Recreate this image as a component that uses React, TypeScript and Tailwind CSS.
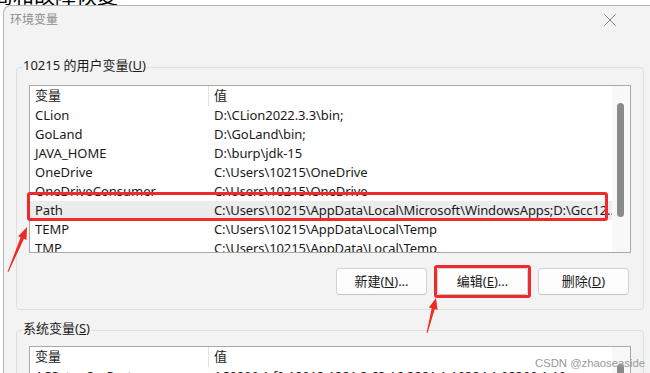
import { X } from "lucide-react";

type Row = { name: string; value: string };

const USER_VARS: Row[] = [
  { name: "CLion", value: "D:\\CLion2022.3.3\\bin;" },
  { name: "GoLand", value: "D:\\GoLand\\bin;" },
  { name: "JAVA_HOME", value: "D:\\burp\\jdk-15" },
  { name: "OneDrive", value: "C:\\Users\\10215\\OneDrive" },
  { name: "OneDriveConsumer", value: "C:\\Users\\10215\\OneDrive" },
  { name: "Path", value: "C:\\Users\\10215\\AppData\\Local\\Microsoft\\WindowsApps;D:\\Gcc12.." },
  { name: "TEMP", value: "C:\\Users\\10215\\AppData\\Local\\Temp" },
  { name: "TMP", value: "C:\\Users\\10215\\AppData\\Local\\Temp" },
];

const SYSTEM_VARS: Row[] = [
  { name: "ACSetupSvcPort", value: "1C0800 1 f0 18013 1381 3.63 16.3881 1.10384 1 08300 1 10" },
];

function VarList({ rows, selected, children }: { rows: Row[]; selected?: string; children?: React.ReactNode }) {
  return (
    <div className="relative h-[168px] border border-[#a9a9a9] bg-white flex">
      <div className="flex-1 min-w-0 flex flex-col overflow-hidden">
        <div className="h-[20px] shrink-0 flex items-center">
          <div className="w-[179px] h-full pl-[5px] flex items-center border-r border-[#e3e3e3]">变量</div>
          <div className="pl-[5px]">值</div>
        </div>
        {rows.map((r) => (
          <div
            key={r.name}
            className={`h-[19px] shrink-0 flex items-center ${r.name === selected ? "bg-[#ececec]" : ""}`}
          >
            <div className="w-[179px] shrink-0 pl-[5px] whitespace-nowrap">{r.name}</div>
            <div className="flex-1 min-w-0 pl-[5px] tracking-[-0.1px] whitespace-nowrap overflow-hidden">{r.value}</div>
          </div>
        ))}
      </div>
      <div className="w-[18px] shrink-0 bg-[#f8f8f8] pt-[17px]">
        <div className="h-[114px] w-[7px] ml-[5px] rounded-full bg-[#8a8a8a]" />
      </div>
      {children}
    </div>
  );
}

function Btn({ label, k, after, outlined }: { label: string; k: string; after: string; outlined?: boolean }) {
  return (
    <div className="relative">
      <button className="w-[91px] h-[27px] rounded-[4px] border border-[#d3d3d3] border-b-[#c2c2c2] bg-[#fdfdfd] text-[13px] text-[#1a1a1a]">
        {label}(<span className="underline">{k}</span>){after}
      </button>
      {outlined && <span className="absolute -inset-[3px] rounded-[3px] border-[3px] border-[#f02a2a]" />}
    </div>
  );
}

export default function App() {
  return (
    <div className="relative w-[650px] h-[373px] overflow-hidden bg-white text-[13px] text-[#1a1a1a] font-['Noto_Sans','Noto_Sans_CJK_SC',sans-serif]">
      <div className="h-[5px] overflow-hidden">
        <div className="-mt-[15px] -ml-[8px] text-[21px] leading-[21px] text-black whitespace-nowrap">局和故障恢复</div>
      </div>

      <div className="ml-[3px] h-[400px] border-l border-t border-[#b4b4b4] rounded-tl-[8px] bg-[#f3f3f3] flex flex-col">
        <div className="h-[28px] shrink-0 flex items-center justify-between pl-[6px] pr-[29px]">
          <span className="text-[12px] text-[#8c8c8c]">环境变量</span>
          <X size={22} strokeWidth={1} className="text-[#7a7a7a]" />
        </div>

        <fieldset className="mt-[22px] ml-[12px] w-[628px] min-w-0 border border-[#dedede] rounded-[4px] pb-[14px]">
          <legend className="ml-[5px] px-px pb-[4px] leading-[18px]">10215 的用户变量(<span className="underline">U</span>)</legend>
          <div className="px-[12px]">
            <div className="mt-[7px]">
              <VarList rows={USER_VARS} selected="Path">
                <span className="absolute left-[-3px] top-[106px] w-[581px] h-[29px] rounded-[3px] border-[3px] border-[#f02a2a]" />
              </VarList>
            </div>
            <div className="mt-[15px] pr-[2px] flex justify-end gap-[10px]">
              <Btn label="新建" k="N" after="..." />
              <Btn label="编辑" k="E" after="..." outlined />
              <Btn label="删除" k="D" after="" />
            </div>
          </div>
        </fieldset>

        <fieldset className="mt-[9px] ml-[12px] w-[628px] min-w-0 border border-[#dedede] rounded-[4px]">
          <legend className="ml-[5px] px-px pb-[4px] leading-[18px]">系统变量(<span className="underline">S</span>)</legend>
          <div className="px-[12px]">
            <div className="mt-[5px]">
              <VarList rows={SYSTEM_VARS} />
            </div>
          </div>
        </fieldset>
      </div>

      <svg className="absolute inset-0 pointer-events-none" width="650" height="373" viewBox="0 0 650 373">
        <polygon points="27,227 26.5,240 24,238.8 8.4,272 7.6,271.6 20.6,237.4 18.2,236.3" fill="#ee2a24" />
        <polygon points="436,298 437.6,310 434.8,309.1 427.5,333 426.6,332.8 431.7,308.3 428.9,307.6" fill="#ee2a24" />
      </svg>

      <div className="absolute left-[535px] top-[355px] text-[11.3px] text-[#9a9a9a] font-['Liberation_Sans',sans-serif] whitespace-nowrap">
        CSDN @zhaoseaside
      </div>
    </div>
  );
}
